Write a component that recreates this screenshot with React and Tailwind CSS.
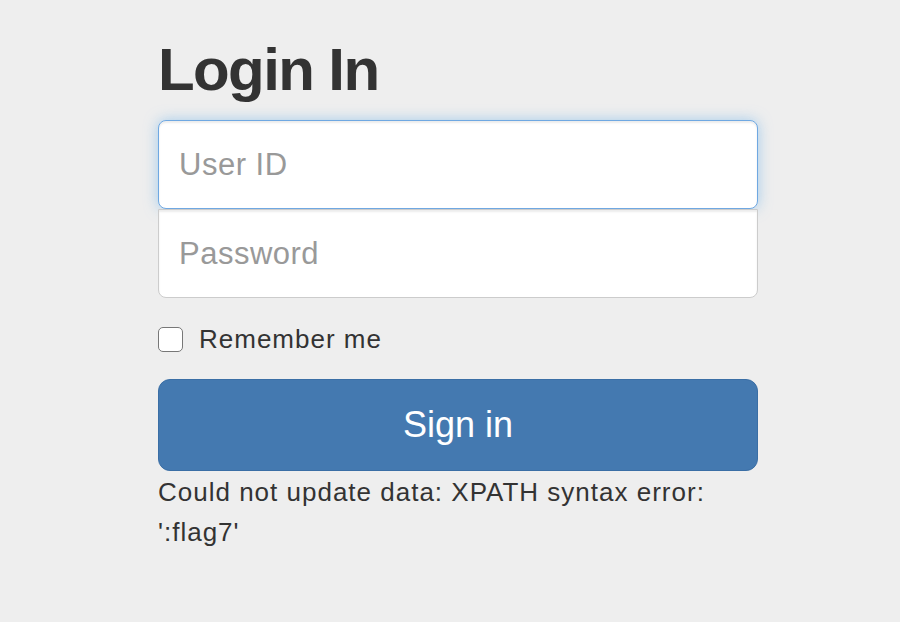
import React from "react";

const App = () => {
    return (
        <div
            className="min-h-screen bg-[#eeeeee] text-[#333333]"
            style={{ fontFamily: '"Liberation Sans", Arial, sans-serif' }}
        >
            <div className="ml-[158px] w-[600px] pt-[37px]">
                <h2 className="text-[60px] font-bold leading-[66px] tracking-[-1.6px] mb-[17px]">
                    Login In
                </h2>

                {/* focused user id field */}
                <input
                    type="text"
                    placeholder="User ID"
                    className="block w-full h-[89px] px-[20px] bg-white border border-[#6fa8e2] rounded-[8px] text-[31px] tracking-[0.5px] placeholder:text-[#999999] outline-none shadow-[inset_0_2px_2px_rgba(0,0,0,0.075),0_0_14px_rgba(102,175,233,0.55)]"
                />
                <input
                    type="password"
                    placeholder="Password"
                    className="block w-full h-[89px] px-[20px] bg-white border border-[#cccccc] rounded-b-[8px] text-[31px] tracking-[0.5px] placeholder:text-[#999999] outline-none shadow-[inset_0_2px_2px_rgba(0,0,0,0.075)]"
                />

                <label className="flex items-start gap-[16px] mt-[29px]">
                    <input
                        type="checkbox"
                        className="appearance-none w-[25px] h-[25px] bg-white border-[1.5px] border-[#777777] rounded-[5px] shrink-0"
                    />
                    <span className="text-[26px] leading-[40px] tracking-[1px] -mt-[8px]">
                        Remember me
                    </span>
                </label>

                <button className="block w-full h-[92px] mt-[20px] bg-[#4479b0] border border-[#3a6ea5] rounded-[12px] text-white text-[36px]">
                    Sign in
                </button>

                <p className="mt-[1px] text-[26px] leading-[40px] tracking-[1px]">
                    Could not update data: XPATH syntax error: ':flag7'
                </p>
            </div>
        </div>
    );
};

export default App;
